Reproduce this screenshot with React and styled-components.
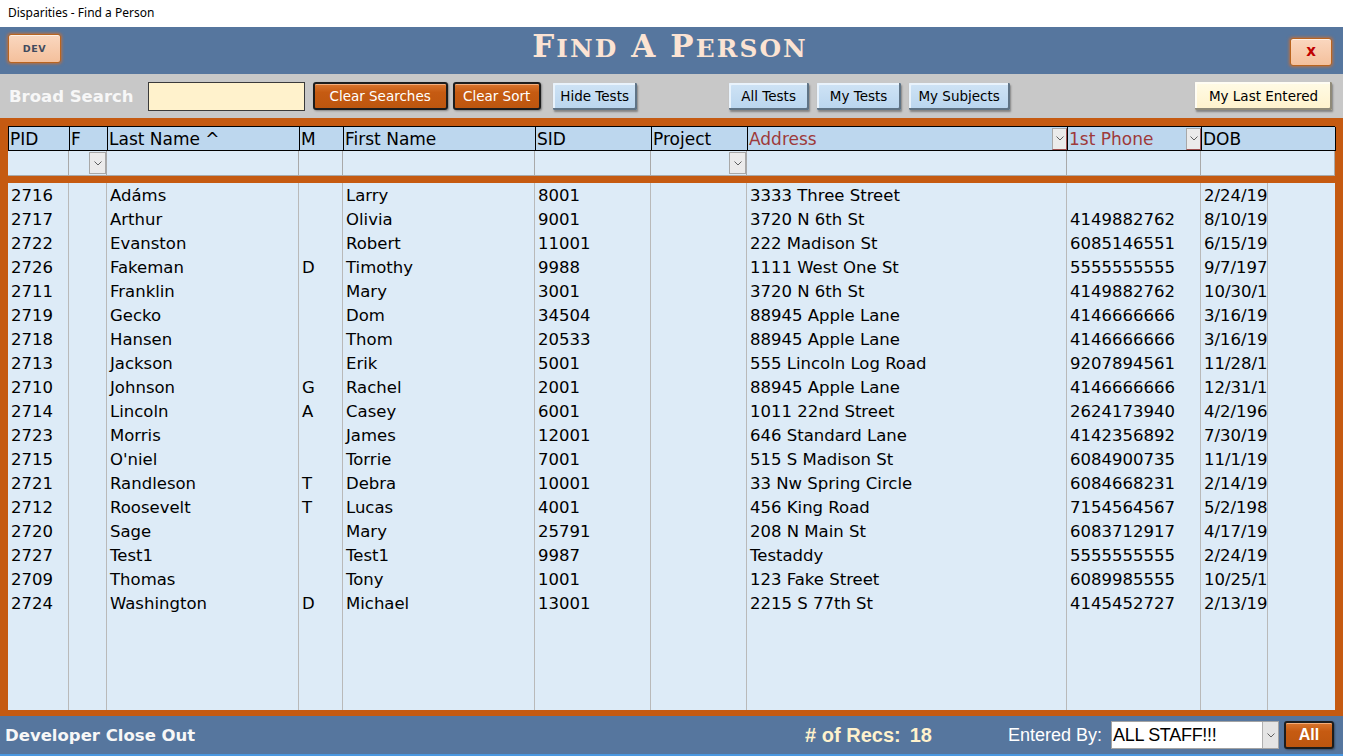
import React from "react";
import styled, { createGlobalStyle } from "styled-components";

const GlobalStyle = createGlobalStyle`
  html, body { margin: 0; padding: 0; background: #ffffff; }
  body { width: 1345px; height: 756px; overflow: hidden; font-family: "DejaVu Sans", sans-serif; }
  * { box-sizing: border-box; }
`;

const BLUE = "#56769e";
const ORANGE = "#c55a11";
const HEAD_BG = "#bdd7ee";
const CELL_BG = "#ddebf7";

const Window = styled.div`
  width: 1345px;
  height: 756px;
  display: flex;
  flex-direction: column;
  background: #ffffff;
`;

const TitleBar = styled.div`
  height: 27px;
  flex: none;
  display: flex;
  align-items: center;
  padding: 0 0 3px 8px;
  font-family: "Noto Sans", "Open Sans", sans-serif;
  font-size: 12px;
  color: #000;
`;

const Frame = styled.div`
  width: 1343px;
  flex: 1;
  display: flex;
  flex-direction: column;
  border-bottom: 2px solid #4a97e0;
`;

const Header = styled.header`
  height: 47px;
  flex: none;
  background: ${BLUE};
  display: grid;
  grid-template-columns: 1fr auto 1fr;
  padding: 0 11px 0 8px;
`;

const DevButton = styled.button`
  justify-self: start;
  align-self: start;
  margin-top: 7px;
  width: 53px;
  height: 29px;
  padding: 0;
  background: linear-gradient(#fad7bf, #f4c09c);
  border: 1px solid #b9641f;
  border-radius: 3px;
  box-shadow: 0 0 3px 1px rgba(214, 110, 40, 0.75), inset 0 1px 0 rgba(255,255,255,0.6);
  font-family: "DejaVu Sans", sans-serif;
  font-weight: bold;
  font-size: 9.5px;
  letter-spacing: 0.6px;
  color: #404a5e;
`;

const CloseButton = styled.button`
  justify-self: end;
  align-self: start;
  margin-top: 11px;
  width: 42px;
  height: 28px;
  padding: 0 0 3px 0;
  background: linear-gradient(#fad7bf, #f4c09c);
  border: 1px solid #b9641f;
  border-radius: 3px;
  box-shadow: 0 0 3px 1px rgba(214, 110, 40, 0.75), inset 0 1px 0 rgba(255,255,255,0.6);
  font-family: "DejaVu Sans", sans-serif;
  font-weight: bold;
  font-size: 15px;
  color: #c00000;
`;

const Title = styled.h1`
  margin: 1px 0 0 0;
  align-self: start;
  font-family: "DejaVu Serif", "Liberation Serif", serif;
  font-weight: bold;
  font-size: 31px;
  line-height: 36px;
  letter-spacing: 2.1px;
  color: #fbe3d3;
  white-space: nowrap;
`;

const SmallCap = styled.span`
  text-transform: uppercase;
  font-size: 0.8em;
`;

const Toolbar = styled.div`
  height: 44px;
  flex: none;
  background: #c8c8c8;
  display: flex;
  align-items: center;
  padding: 0 11px 0 9px;
`;

const ToolLabel = styled.span`
  font-family: "DejaVu Sans", sans-serif;
  font-weight: bold;
  font-size: 16.5px;
  color: #f7f7f7;
  white-space: nowrap;
`;

const SearchBox = styled.input`
  margin-left: 14px;
  width: 157px;
  height: 29px;
  background: #fff2cc;
  border: 1px solid #3a3a3a;
  outline: none;
  padding: 0 3px;
  font-family: "DejaVu Sans", sans-serif;
  font-size: 14px;
`;

const OrangeButton = styled.button`
  margin-left: ${(p) => p.$ml || 0}px;
  width: ${(p) => p.$w}px;
  height: ${(p) => p.$h || 28}px;
  padding: 0;
  background: linear-gradient(#d9762f 0%, #c65b12 35%, #bd560f 100%);
  border: 2px solid #1d1d1d;
  border-radius: 3px;
  box-shadow: inset 0 1px 0 rgba(255, 200, 160, 0.7), 1px 1px 2px rgba(0,0,0,0.35);
  color: #ffffff;
  font-family: ${(p) => (p.$bold ? '"Liberation Sans", sans-serif' : '"DejaVu Sans", sans-serif')};
  font-weight: ${(p) => (p.$bold ? "bold" : "normal")};
  font-size: ${(p) => p.$fs || 13.5}px;
`;

const BevelButton = styled.button`
  margin-left: ${(p) => p.$ml || 0}px;
  width: ${(p) => p.$w}px;
  height: ${(p) => p.$h || 27}px;
  padding: 0;
  background: ${(p) => (p.$pale ? "linear-gradient(#fffbe6, #fff2cc)" : "linear-gradient(#cfe3f5, #b9d5ee)")};
  border: none;
  border-radius: 1px;
  box-shadow:
    inset -2px -2px 0 ${(p) => (p.$pale ? "#8f8a79" : "#5f7385")},
    inset 2px 2px 0 ${(p) => (p.$pale ? "#fffdf3" : "#e9f3fc")},
    1px 2px 2px rgba(0, 0, 0, 0.35);
  color: #000;
  font-family: "DejaVu Sans", sans-serif;
  font-size: 13.5px;
`;

const Spacer = styled.div`
  flex: 1;
`;

const Main = styled.main`
  flex: 1;
  background: ${ORANGE};
  padding: 8px 8px 6px 8px;
  display: flex;
  flex-direction: column;
  min-height: 0;
`;

const HEAD_COLS = "61px 38px 192px 44px 192px 116px 96px 320px 134px 134px";
const DATA_COLS = "61px 38px 192px 44px 192px 116px 96px 320px 134px 67px 1fr";

const HeadRow = styled.div`
  display: grid;
  grid-template-columns: ${HEAD_COLS};
  border-top: 1px solid #000;
  border-left: 1px solid #000;
`;

const HeadCell = styled.div`
  height: 24px;
  background: ${HEAD_BG};
  border-right: 1px solid #000;
  border-bottom: 1px solid #000;
  display: flex;
  align-items: center;
  justify-content: space-between;
  padding-left: 1px;
  font-size: 17px;
  color: ${(p) => (p.$accent ? "#9e3a3a" : "#000")};
  white-space: nowrap;
  overflow: hidden;
`;

const FilterRow = styled.div`
  display: grid;
  grid-template-columns: ${HEAD_COLS};
`;

const FilterCell = styled.div`
  height: 25px;
  background: ${CELL_BG};
  border-right: 1px solid #a9a9a9;
  border-bottom: 1px solid #a9a9a9;
  display: flex;
  align-items: center;
  justify-content: flex-end;
`;

const DropBox = styled.span`
  width: ${(p) => p.$w || 17}px;
  height: 22px;
  flex: none;
  display: flex;
  align-items: center;
  justify-content: center;
  background: #ebebeb;
  border: 1px solid #a8a8a8;
  border-bottom-color: ${(p) => (p.$accent ? "#a05050" : "#a8a8a8")};
  border-right-color: ${(p) => (p.$accent ? "#a05050" : "#a8a8a8")};
`;

const DataArea = styled.div`
  margin-top: 7px;
  flex: 1;
  background: ${CELL_BG};
  display: grid;
  grid-template-columns: ${DATA_COLS};
  min-height: 0;
`;

const DataCol = styled.div`
  border-right: ${(p) => (p.$last ? "none" : "1px solid #b9b9b9")};
  padding-top: 1px;
  overflow: hidden;
`;

const DataCell = styled.div`
  height: 24px;
  line-height: 24px;
  padding-left: 3px;
  font-size: 16.5px;
  color: #000;
  white-space: nowrap;
`;

const Footer = styled.footer`
  height: 38px;
  flex: none;
  background: ${BLUE};
  display: flex;
  align-items: center;
  padding: 0 9px 0 5px;
`;

const FooterLabel = styled.span`
  font-family: "DejaVu Sans", sans-serif;
  font-weight: bold;
  font-size: 16.5px;
  color: #f7f7f7;
  white-space: nowrap;
`;

const RecCount = styled.span`
  font-family: "Liberation Sans", sans-serif;
  font-weight: bold;
  font-size: 20px;
  color: #fff2cc;
  white-space: nowrap;
`;

const RecNumber = styled.span`
  margin-left: 9px;
`;

const EnteredLabel = styled.span`
  margin-left: 76px;
  font-family: "Liberation Sans", sans-serif;
  font-size: 18px;
  color: #ffffff;
  white-space: nowrap;
`;

const SelectBox = styled.div`
  margin-left: 9px;
  width: 168px;
  height: 28px;
  background: #ffffff;
  border: 1px solid #a3a3a3;
  border-right: none;
  display: flex;
  align-items: stretch;
`;

const SelectText = styled.span`
  flex: 1;
  padding-left: 1px;
  font-family: "Liberation Sans", sans-serif;
  font-size: 18px;
  line-height: 27px;
  color: #000;
  letter-spacing: -0.3px;
  white-space: nowrap;
`;

const SelectArrow = styled.span`
  width: 17px;
  display: flex;
  align-items: center;
  justify-content: center;
  background: #e4e4e4;
  border-left: 1px solid #b0b0b0;
  border-right: 1px solid #a3a3a3;
`;

const Chevron = () => (
  <svg width="8" height="5" viewBox="0 0 8 5">
    <path d="M0.5 0.5 L4 4 L7.5 0.5" fill="none" stroke="#606060" strokeWidth="1" />
  </svg>
);

const headers = [
  { label: "PID" },
  { label: "F" },
  { label: "Last Name ^" },
  { label: "M" },
  { label: "First Name" },
  { label: "SID" },
  { label: "Project" },
  { label: "Address", accent: true, drop: true },
  { label: "1st Phone", accent: true, drop: true },
  { label: "DOB" },
];

const filterDrops = [false, true, false, false, false, false, true, false, false, false];

const rows = [
  ["2716", "", "Adáms", "", "Larry", "8001", "", "3333 Three Street", "", "2/24/19"],
  ["2717", "", "Arthur", "", "Olivia", "9001", "", "3720 N 6th St", "4149882762", "8/10/19"],
  ["2722", "", "Evanston", "", "Robert", "11001", "", "222 Madison St", "6085146551", "6/15/19"],
  ["2726", "", "Fakeman", "D", "Timothy", "9988", "", "1111 West One St", "5555555555", "9/7/197"],
  ["2711", "", "Franklin", "", "Mary", "3001", "", "3720 N 6th St", "4149882762", "10/30/1"],
  ["2719", "", "Gecko", "", "Dom", "34504", "", "88945 Apple Lane", "4146666666", "3/16/19"],
  ["2718", "", "Hansen", "", "Thom", "20533", "", "88945 Apple Lane", "4146666666", "3/16/19"],
  ["2713", "", "Jackson", "", "Erik", "5001", "", "555 Lincoln Log Road", "9207894561", "11/28/1"],
  ["2710", "", "Johnson", "G", "Rachel", "2001", "", "88945 Apple Lane", "4146666666", "12/31/1"],
  ["2714", "", "Lincoln", "A", "Casey", "6001", "", "1011 22nd Street", "2624173940", "4/2/196"],
  ["2723", "", "Morris", "", "James", "12001", "", "646 Standard Lane", "4142356892", "7/30/19"],
  ["2715", "", "O'niel", "", "Torrie", "7001", "", "515 S Madison St", "6084900735", "11/1/19"],
  ["2721", "", "Randleson", "T", "Debra", "10001", "", "33 Nw Spring Circle", "6084668231", "2/14/19"],
  ["2712", "", "Roosevelt", "T", "Lucas", "4001", "", "456 King Road", "7154564567", "5/2/198"],
  ["2720", "", "Sage", "", "Mary", "25791", "", "208 N Main St", "6083712917", "4/17/19"],
  ["2727", "", "Test1", "", "Test1", "9987", "", "Testaddy", "5555555555", "2/24/19"],
  ["2709", "", "Thomas", "", "Tony", "1001", "", "123 Fake Street", "6089985555", "10/25/1"],
  ["2724", "", "Washington", "D", "Michael", "13001", "", "2215 S 77th St", "4145452727", "2/13/19"],
];

export default function App() {
  return (
    <>
      <GlobalStyle />
      <Window>
        <TitleBar>Disparities - Find a Person</TitleBar>
        <Frame>
          <Header>
            <DevButton>DEV</DevButton>
            <Title>
              F<SmallCap>ind</SmallCap> A P<SmallCap>erson</SmallCap>
            </Title>
            <CloseButton>x</CloseButton>
          </Header>

          <Toolbar>
            <ToolLabel>Broad Search</ToolLabel>
            <SearchBox defaultValue="" />
            <OrangeButton $ml={8} $w={135}>Clear Searches</OrangeButton>
            <OrangeButton $ml={5} $w={88}>Clear Sort</OrangeButton>
            <BevelButton $ml={12} $w={84}>Hide Tests</BevelButton>
            <BevelButton $ml={92} $w={80}>All Tests</BevelButton>
            <BevelButton $ml={8} $w={84}>My Tests</BevelButton>
            <BevelButton $ml={8} $w={101}>My Subjects</BevelButton>
            <Spacer />
            <BevelButton $pale $w={137} $h={28}>My Last Entered</BevelButton>
          </Toolbar>

          <Main>
            <HeadRow>
              {headers.map((h) => (
                <HeadCell key={h.label} $accent={h.accent}>
                  <span>{h.label}</span>
                  {h.drop && (
                    <DropBox $w={15} $accent>
                      <Chevron />
                    </DropBox>
                  )}
                </HeadCell>
              ))}
            </HeadRow>
            <FilterRow>
              {filterDrops.map((d, i) => (
                <FilterCell key={i}>
                  {d && (
                    <DropBox>
                      <Chevron />
                    </DropBox>
                  )}
                </FilterCell>
              ))}
            </FilterRow>
            <DataArea>
              {headers.map((h, ci) => (
                <DataCol key={h.label}>
                  {rows.map((r) => (
                    <DataCell key={r[0]}>{r[ci]}</DataCell>
                  ))}
                </DataCol>
              ))}
              <DataCol $last />
            </DataArea>
          </Main>

          <Footer>
            <FooterLabel>Developer Close Out</FooterLabel>
            <Spacer />
            <RecCount>
              # of Recs:<RecNumber>18</RecNumber>
            </RecCount>
            <EnteredLabel>Entered By:</EnteredLabel>
            <SelectBox>
              <SelectText>ALL STAFF!!!</SelectText>
              <SelectArrow>
                <Chevron />
              </SelectArrow>
            </SelectBox>
            <OrangeButton $ml={5} $w={50} $bold $fs={16}>All</OrangeButton>
          </Footer>
        </Frame>
      </Window>
    </>
  );
}
